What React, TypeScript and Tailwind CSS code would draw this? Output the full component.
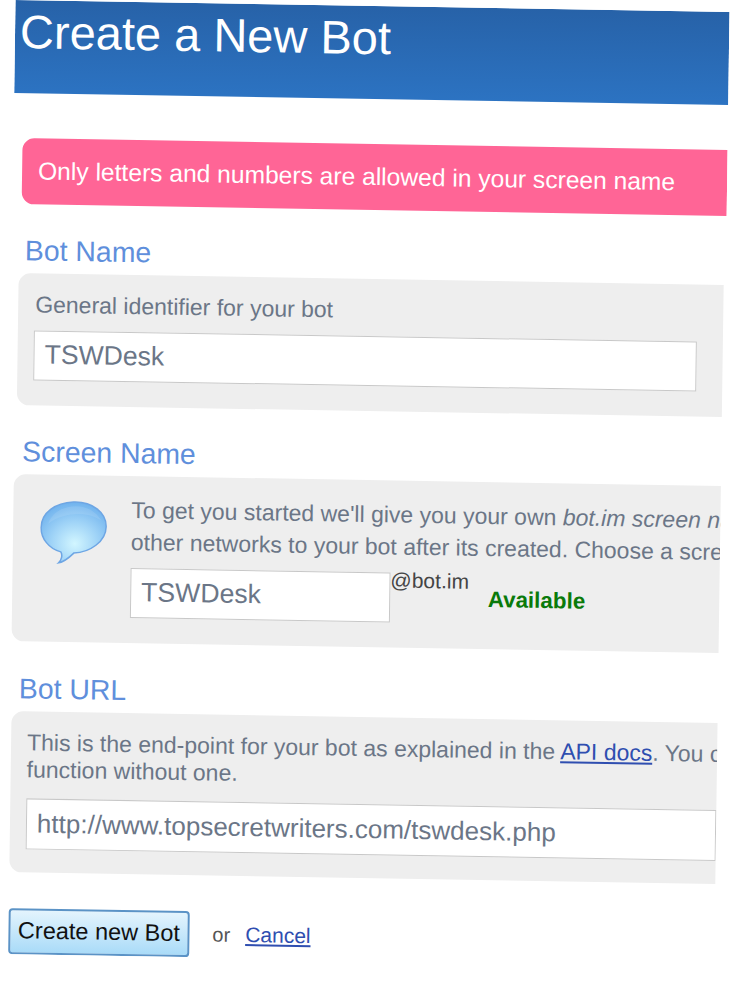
import { ReactNode } from 'react';

function Heading({ children }: { children: ReactNode }) {
  return <h2 className="ml-[13px] text-[28.4px] leading-[32px] text-[#5f8fdc]">{children}</h2>;
}

function SpeechBubble() {
  return (
    <svg width="68" height="66" viewBox="0 0 68 66" className="-mt-[3px] shrink-0">
      <defs>
        <radialGradient id="bubbleFill" cx="0.52" cy="0.68" r="0.72">
          <stop offset="0" stopColor="#d2f6ff" />
          <stop offset="0.5" stopColor="#9fd3f7" />
          <stop offset="1" stopColor="#6aaeec" />
        </radialGradient>
      </defs>
      <path
        d="M33 2C52 1 66 12 66 26C66 41 50 52 34 53C29 58 24 62 19 63C22 60 23 55 21 52C9 49 1 39 1 28C1 13 15 3 33 2Z"
        fill="url(#bubbleFill)"
        stroke="#6ea6e4"
        strokeWidth="1.5"
      />
      <path d="M8 24C12 12 24 6 36 6C46 6 56 11 61 20C50 12 26 10 8 24Z" fill="#ffffff" opacity="0.1" />
    </svg>
  );
}

export default function App() {
  return (
    <div className="h-[1000px] overflow-hidden bg-white font-['Liberation_Sans',Arial,sans-serif]">
      <div className="w-[714px] origin-top-left overflow-hidden [transform:matrix(1,0.0168,-0.014,1,15.5,0)]">
        <div className="h-[93px] bg-gradient-to-b from-[#2762a8] to-[#2c73c2] pl-[5px] pt-[4px] text-[47px] leading-[56px] text-white">
          Create a New Bot
        </div>

        <div className="ml-[9px] mt-[45px] flex h-[66px] items-center rounded-l-[12px] bg-[#ff6596] pl-[16px] text-[24.6px] text-white">
          Only letters and numbers are allowed in your screen name
        </div>

        <div className="mt-[30px]">
          <Heading>Bot Name</Heading>
          <div className="ml-[7px] mr-[2px] mt-[7px] h-[132px] rounded-l-[12px] bg-[#eeeeee] pl-[17px] pt-[17px] text-[#6b7687]">
            <p className="text-[23px] leading-[28px]">General identifier for your bot</p>
            <div className="-ml-[1px] mt-[12px] flex h-[50px] w-[663px] items-center border border-[#c8c8c8] bg-white pl-[10px] text-[26.6px]">
              TSWDesk
            </div>
          </div>
        </div>

        <div className="mt-[30px]">
          <Heading>Screen Name</Heading>
          <div className="ml-[5px] mr-[2px] mt-[7px] flex h-[167px] gap-[23px] overflow-hidden rounded-l-[12px] bg-[#eeeeee] pl-[27px] pt-[28px] text-[#6b7687]">
            <SpeechBubble />
            <div className="-mt-[10px] whitespace-nowrap">
              <p className="text-[23px] leading-[32px]">
                To get you started we'll give you your own <em>bot.im screen name</em>
              </p>
              <p className="text-[23px] leading-[32px]">
                other networks to your bot after its created. Choose a screen name
              </p>
              <div className="mt-[10px] flex items-start">
                <div className="flex h-[50px] w-[260px] items-center border border-[#c8c8c8] bg-white pl-[10px] text-[26.6px]">
                  TSWDesk
                </div>
                <span className="-mt-[4px] text-[21px] leading-[24px] text-[#444444]">@bot.im</span>
                <span className="ml-[19px] mt-[14px] text-[22.4px] font-bold leading-[24px] text-[#0a7a0a]">Available</span>
              </div>
            </div>
          </div>
        </div>

        <div className="mt-[31px]">
          <Heading>Bot URL</Heading>
          <div className="ml-[6px] mr-[2px] mt-[7px] h-[161px] overflow-hidden rounded-l-[12px] bg-[#eeeeee] pl-[16px] pt-[18px] text-[#6b7687]">
            <p className="whitespace-nowrap text-[23px] leading-[27px]">
              This is the end-point for your bot as explained in the{' '}
              <a className="text-[#2f4eb0] underline">API docs</a>. You can
            </p>
            <p className="text-[23px] leading-[27px]">function without one.</p>
            <div className="mt-[15px] flex h-[51px] w-full items-center border border-[#c8c8c8] bg-white pl-[10px] text-[26px]">
              http://www.topsecretwriters.com/tswdesk.php
            </div>
          </div>
        </div>

        <div className="ml-[6px] mt-[36px] flex items-center">
          <button className="flex h-[46px] w-[181px] items-center justify-center rounded-[4px] border-2 border-[#5b93c6] bg-gradient-to-b from-[#e4f4fd] to-[#a9dbf8] text-[23.5px] text-[#111111]">
            Create new Bot
          </button>
          <span className="ml-[23px] text-[20px] text-[#555555]">or</span>
          <a className="ml-[15px] text-[21px] text-[#2f4eb0] underline">Cancel</a>
        </div>
      </div>
    </div>
  );
}
